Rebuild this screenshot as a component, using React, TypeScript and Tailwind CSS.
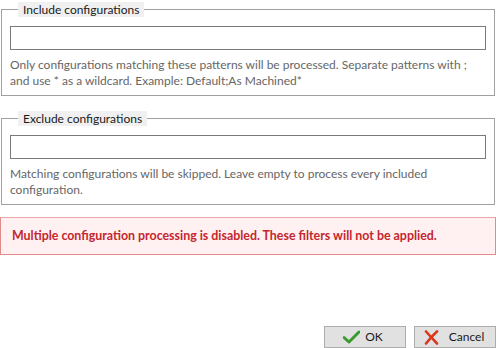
import React from "react";

const font = { fontFamily: 'Lato, "Noto Sans", sans-serif' };

function Group({ title, help }: { title: string; help: React.ReactNode }) {
  return (
    <fieldset className="min-w-0 mx-[1px] border border-[#a0a0a0] px-2 pt-0 pb-[6px]">
      <legend className="ml-2 px-[5px] bg-[#f0f0f0] text-[12px] leading-[15px] text-[#1a1a1a]">
        {title}
      </legend>
      <div className="mt-[9px] h-[24px] border border-[#7a7a7a] bg-white" />
      <p className="mt-[7px] text-[12px] leading-[16px] text-[#666666] whitespace-nowrap">{help}</p>
    </fieldset>
  );
}

function Check() {
  return (
    <svg width="17" height="14" viewBox="0 0 17 14">
      <path d="M1 7.5 L6 12 L16 2" fill="none" stroke="#3a9b2d" strokeWidth="3" strokeLinecap="round" strokeLinejoin="round" />
    </svg>
  );
}

function Cross() {
  return (
    <svg width="15" height="15" viewBox="0 0 15 15">
      <path d="M2 1.5 Q7 7 13 13.5 M13 1.5 Q7 7 2 13.5" fill="none" stroke="#d9381e" strokeWidth="2.6" strokeLinecap="round" />
    </svg>
  );
}

export default function App() {
  return (
    <div className="w-[496px] h-[348px] bg-white flex flex-col" style={font}>
      <div className="mt-[2px]">
        <Group
          title="Include configurations"
          help={
            <>
              Only configurations matching these patterns will be processed. Separate patterns with ;
              <br />
              and use * as a wildcard. Example: Default;As Machined*
            </>
          }
        />
      </div>
      <div className="mt-[15px]">
        <Group
          title="Exclude configurations"
          help={
            <>
              Matching configurations will be skipped. Leave empty to process every included
              <br />
              configuration.
            </>
          }
        />
      </div>
      <div className="mt-[12px] h-[38px] border border-[#e08a8a] border-t-[#eaa8a8] bg-[#fff1f1] flex items-center pl-[11px]">
        <span className="text-[12.4px] font-bold text-[#c4262e] whitespace-nowrap">
          Multiple configuration processing is disabled. These filters will not be applied.
        </span>
      </div>
      <div className="mt-auto flex justify-end gap-2 pb-0">
        <button className="w-[82px] h-[22px] border border-[#adadad] bg-[#e1e1e1] flex items-center justify-center gap-[5px] pr-[4px] text-[12px] text-[#1a1a1a]">
          <Check />
          <span>OK</span>
        </button>
        <button className="w-[82px] h-[22px] border border-[#adadad] bg-[#e1e1e1] flex items-center justify-center gap-[10px] pr-[2px] text-[12px] text-[#1a1a1a]">
          <Cross />
          <span>Cancel</span>
        </button>
      </div>
    </div>
  );
}
